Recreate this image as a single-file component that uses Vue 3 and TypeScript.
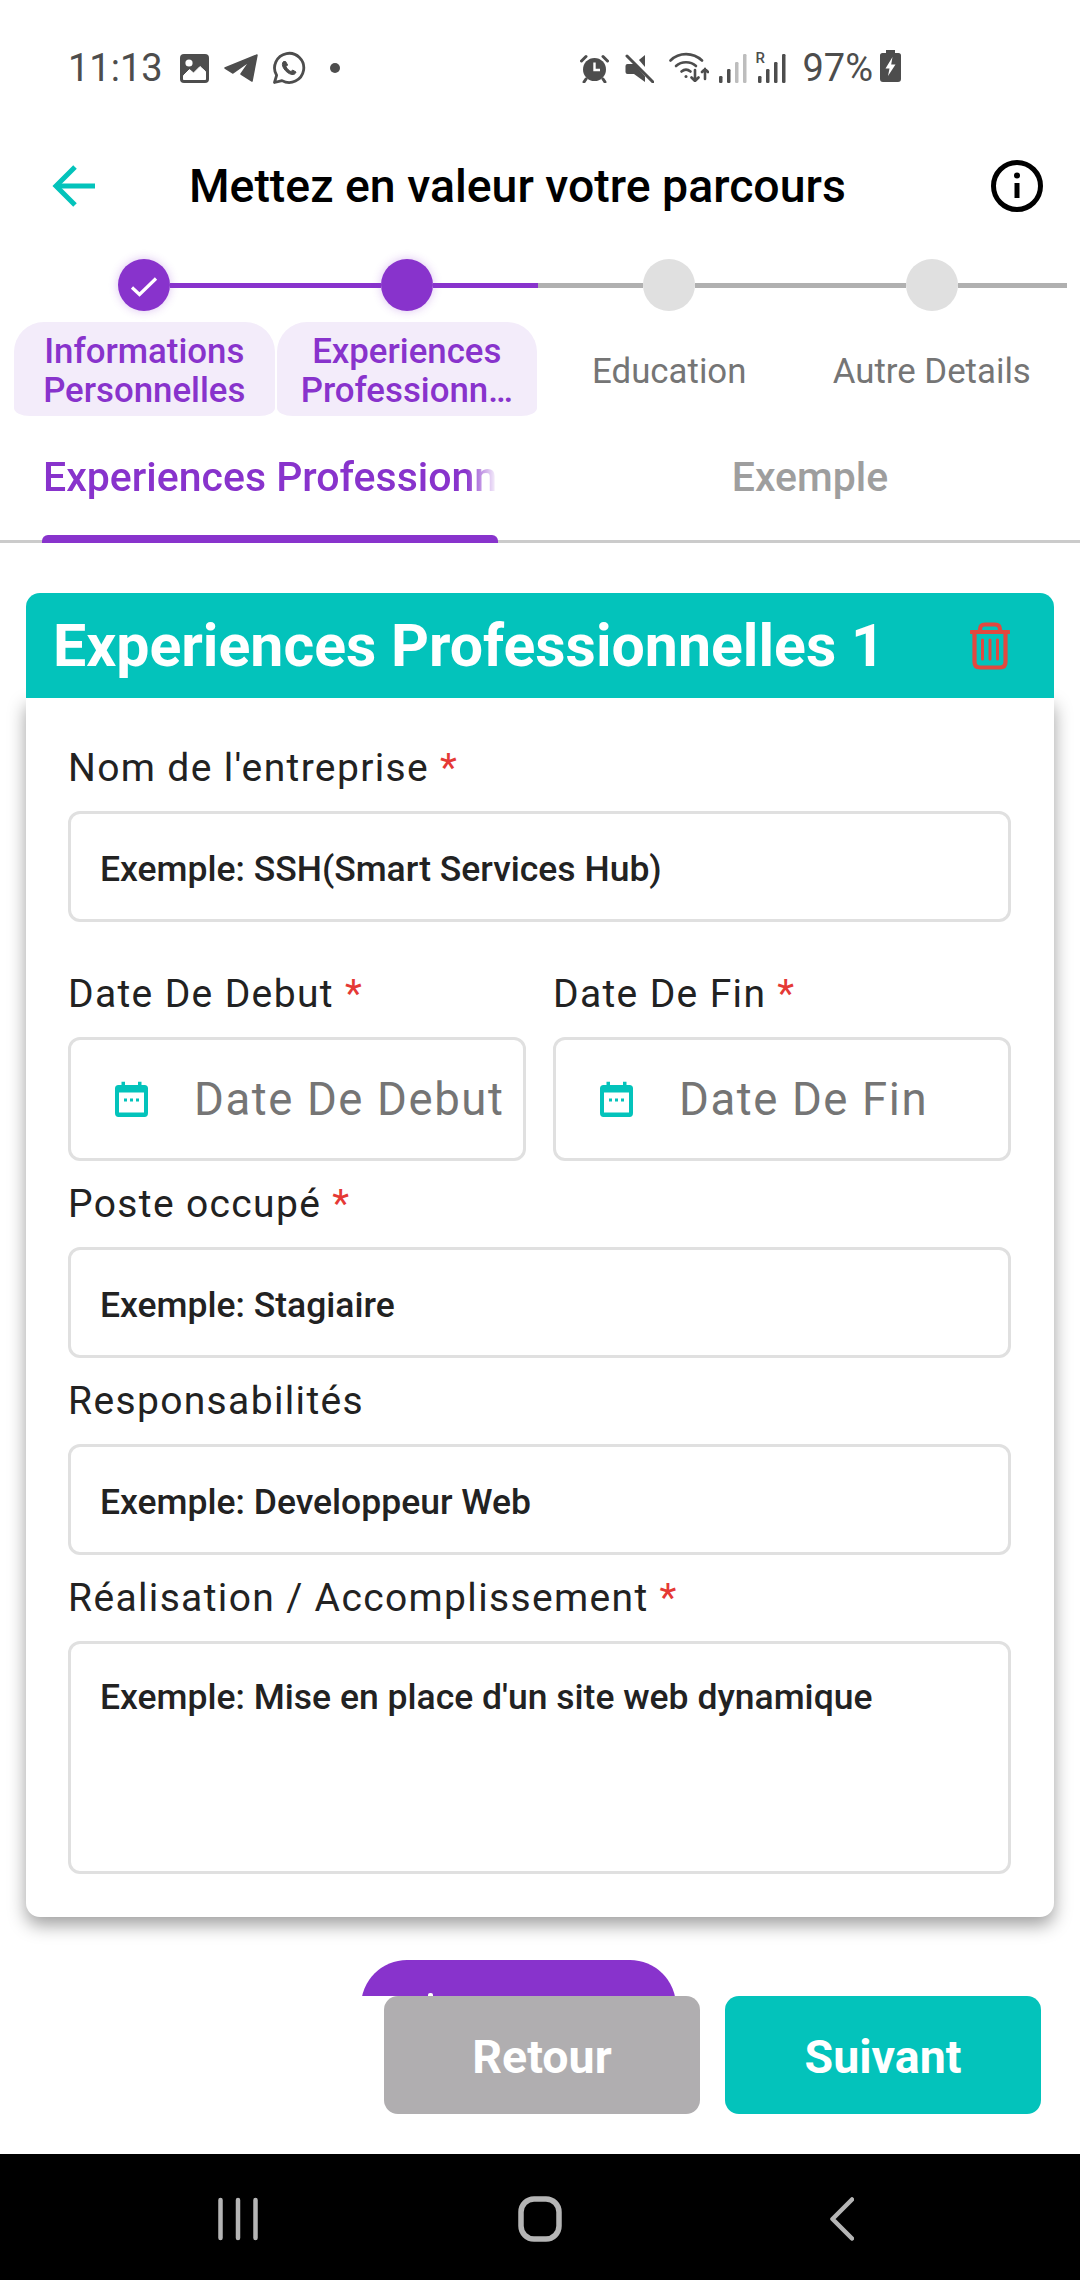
<script setup lang="ts">
interface Step { label: string[]; state: 'done' | 'active' | 'todo' }
const steps: Step[] = [
  { label: ['Informations', 'Personnelles'], state: 'done' },
  { label: ['Experiences', 'Professionn…'], state: 'active' },
  { label: ['Education'], state: 'todo' },
  { label: ['Autre Details'], state: 'todo' },
]
</script>

<template>
  <div class="page">
    <div class="status">
      <div class="status-group">
        <span class="time">11:13</span>
        <svg class="si-img" width="29" height="29" viewBox="0 0 29 29">
          <rect width="29" height="29" rx="4" fill="#4d4d4d" />
          <circle cx="9" cy="9" r="3.6" fill="#fff" />
          <path d="M3.5 25.5V21.5L9.5 15.5L13.5 19L20 12.5L25.5 17.5V25.5Z" fill="#fff" stroke="#fff" stroke-linejoin="round" />
        </svg>
        <svg class="si-tg" width="34" height="28" viewBox="0 0 34 28">
          <path d="M1 14L33 1L28 27L17 20L26 7L9 19Z" fill="#4d4d4d" stroke="#4d4d4d" stroke-width="1.5" stroke-linejoin="round" />
        </svg>
        <svg class="si-wa" width="34" height="34" viewBox="0 0 34 34" fill="none" stroke="#4d4d4d">
          <path d="M2.5 31.5L4.6 24.3A14.6 14.6 0 1 1 10 29.6Z" stroke-width="2.8" stroke-linejoin="round" />
          <path d="M11.5 10.5C10 12 10 14.5 11.6 17.2C13.6 20.6 16.8 23 20 23.5C22 23.8 23.6 22.8 24 21L20.6 19L19 20.6C16.8 19.6 15 17.8 14 15.6L15.6 14L13.6 10.5Z" fill="#4d4d4d" stroke-width="1" stroke-linejoin="round" />
        </svg>
        <span class="si-dot"></span>
      </div>
      <div class="status-group">
        <svg width="29" height="29" viewBox="0 0 29 29">
          <circle cx="14.5" cy="15.5" r="11.5" fill="#4d4d4d" />
          <path d="M14.5 8.5V16H20" stroke="#fff" stroke-width="2.4" fill="none" />
          <path d="M1.5 7L6 2.5M27.5 7L23 2.5" stroke="#4d4d4d" stroke-width="3" stroke-linecap="round" />
          <path d="M6 25L4 28M23 25L25 28" stroke="#4d4d4d" stroke-width="3" stroke-linecap="round" />
        </svg>
        <svg class="si-mute" width="29" height="29" viewBox="0 0 29 29">
          <path d="M0.5 12Q0.5 10 2.5 10H9L20 1V28L9 20H2.5Q0.5 20 0.5 18Z" fill="#4d4d4d" />
          <path d="M4 -1L28 27" stroke="#fff" stroke-width="6" />
          <path d="M2 2L28 28" stroke="#4d4d4d" stroke-width="3" stroke-linecap="round" />
        </svg>
        <svg class="si-wifi" width="40" height="31" viewBox="0 0 40 31" fill="none" stroke="#4d4d4d" stroke-width="2.6" stroke-linecap="round">
          <path d="M1.5 9.5C10 1 24 1 33 9.5" />
          <path d="M7 15C12.5 10 21.5 10 27 15" />
          <path d="M12.5 20.5C15.5 18 18.5 18 21.5 20.5" />
          <circle cx="17" cy="25.5" r="1.5" fill="#4d4d4d" stroke="none" />
          <path d="M26 19V30M22.5 26.5L26 30L29.5 26.5" />
          <path d="M36 28V18M33 21L36 18L39 21" />
        </svg>
        <svg class="si-sig1" width="28" height="29" viewBox="0 0 28 29">
          <rect x="0" y="22" width="3.5" height="7" rx="1.2" fill="#4d4d4d" />
          <rect x="8" y="15" width="3.5" height="14" rx="1.2" fill="#4d4d4d" />
          <rect x="16" y="8" width="3.5" height="21" rx="1.2" fill="#bdbdbd" />
          <rect x="24" y="0" width="3.5" height="29" rx="1.2" fill="#bdbdbd" />
        </svg>
        <div class="si-sig2">
          <span class="r">R</span>
          <svg width="31" height="29" viewBox="0 0 31 29">
            <rect x="3" y="22" width="3.5" height="7" rx="1.2" fill="#4d4d4d" />
            <rect x="11" y="15" width="3.5" height="14" rx="1.2" fill="#4d4d4d" />
            <rect x="19" y="8" width="3.5" height="21" rx="1.2" fill="#4d4d4d" />
            <rect x="27" y="0" width="3.5" height="29" rx="1.2" fill="#4d4d4d" />
          </svg>
        </div>
        <span class="batt-text">97%</span>
        <svg class="si-batt" width="21" height="32" viewBox="0 0 21 32">
          <path d="M6 0H15V3H18.5Q21 3 21 5.5V29Q21 32 18 32H3Q0 32 0 29V5.5Q0 3 2.5 3H6Z" fill="#4d4d4d" />
          <path d="M12.5 7L5.5 18.5H9.5L8 26L15.5 14.5H11.2Z" fill="#fff" />
        </svg>
      </div>
    </div>

    <div class="header">
      <svg class="back" width="44" height="42" viewBox="0 0 44 42" fill="none" stroke="#03c3bb" stroke-width="5">
        <path d="M43 21H4" />
        <path d="M23 2L4 21L23 40" />
      </svg>
      <h1 class="title">Mettez en valeur votre parcours</h1>
      <svg class="info" width="52" height="52" viewBox="0 0 52 52" fill="none" stroke="#000">
        <circle cx="26" cy="26" r="23.5" stroke-width="5" />
        <path d="M26 23V38" stroke-width="5" />
        <circle cx="26" cy="15.5" r="3" fill="#000" stroke="none" />
      </svg>
    </div>

    <div class="stepper">
      <div v-for="(s, i) in steps" :key="i" class="step">
        <div class="track">
          <span class="seg" :class="{ none: i === 0, on: s.state !== 'todo' }"></span>
          <span class="dot" :class="s.state">
            <svg v-if="s.state === 'done'" width="52" height="52" viewBox="0 0 52 52" fill="none">
              <path d="M14 28.5L21.5 35.5L38 19.5" stroke="#fff" stroke-width="3.2" />
            </svg>
          </span>
          <span class="seg" :class="{ on: s.state !== 'todo' }"></span>
        </div>
        <div class="chip" :class="{ lit: s.state !== 'todo' }">
          <span v-for="l in s.label" :key="l">{{ l }}</span>
        </div>
      </div>
    </div>

    <div class="tabs">
      <div class="tab tab-on">
        <span class="tab-text">Experiences Professionn</span>
        <span class="tab-bar"></span>
      </div>
      <div class="tab tab-off">Exemple</div>
    </div>

    <section class="card">
      <div class="card-head">
        <h2>Experiences Professionnelles 1</h2>
        <svg width="40" height="48" viewBox="0 0 40 48" fill="none" stroke="#e2483f" stroke-width="4.2" stroke-linecap="round">
          <path d="M1.5 10H38.5" />
          <path d="M10 10V7.5Q10 2.5 15 2.5H25Q30 2.5 30 7.5V10" />
          <path d="M4.5 10V40Q4.5 45.5 10 45.5H30Q35.5 45.5 35.5 40V10" />
          <path d="M12.5 18V37M20 18V37M27.5 18V37" stroke-width="3" />
        </svg>
      </div>
      <div class="card-body">
        <div class="field">
          <label class="lbl">Nom de l'entreprise <em>*</em></label>
          <div class="box">Exemple: SSH(Smart Services Hub)</div>
        </div>
        <div class="dates">
          <div class="field">
            <label class="lbl">Date De Debut <em>*</em></label>
            <div class="box date">
              <svg width="33" height="36" viewBox="0 0 33 36">
                <path d="M3.5 4H6.5V0.8H10V4H23V0.8H26.5V4H29.5Q33 4 33 7.5V32Q33 36 29.5 36H3.5Q0 36 0 32V7.5Q0 4 3.5 4Z" fill="#03c3bb" />
                <rect x="4" y="11.5" width="25" height="20" fill="#fff" />
                <path d="M9 17.5h3v3h-3zM15 17.5h3v3h-3zM21 17.5h3v3h-3z" fill="#03c3bb" />
              </svg>
              <span>Date De Debut</span>
            </div>
          </div>
          <div class="field">
            <label class="lbl">Date De Fin <em>*</em></label>
            <div class="box date">
              <svg width="33" height="36" viewBox="0 0 33 36">
                <path d="M3.5 4H6.5V0.8H10V4H23V0.8H26.5V4H29.5Q33 4 33 7.5V32Q33 36 29.5 36H3.5Q0 36 0 32V7.5Q0 4 3.5 4Z" fill="#03c3bb" />
                <rect x="4" y="11.5" width="25" height="20" fill="#fff" />
                <path d="M9 17.5h3v3h-3zM15 17.5h3v3h-3zM21 17.5h3v3h-3z" fill="#03c3bb" />
              </svg>
              <span>Date De Fin</span>
            </div>
          </div>
        </div>
        <div class="field">
          <label class="lbl">Poste occupé <em>*</em></label>
          <div class="box">Exemple: Stagiaire</div>
        </div>
        <div class="field">
          <label class="lbl">Responsabilités</label>
          <div class="box">Exemple: Developpeur Web</div>
        </div>
        <div class="field">
          <label class="lbl">Réalisation / Accomplissement <em>*</em></label>
          <div class="box area">Exemple: Mise en place d'un site web dynamique</div>
        </div>
      </div>
    </section>

    <div class="fab"><span class="fab-speck"></span></div>

    <div class="footer">
      <button class="btn gray">Retour</button>
      <button class="btn teal">Suivant</button>
    </div>

    <div class="nav">
      <svg width="40" height="44" viewBox="0 0 40 44" fill="none" stroke="#b5b5b5" stroke-width="4.5" stroke-linecap="round">
        <path d="M2.5 3V41M20 3V41M37.5 3V41" />
      </svg>
      <svg width="44" height="46" viewBox="0 0 44 46" fill="none" stroke="#b5b5b5" stroke-width="5.5">
        <rect x="3" y="3" width="38" height="40" rx="13" />
      </svg>
      <svg width="24" height="44" viewBox="0 0 24 44" fill="none" stroke="#b5b5b5" stroke-width="4.5" stroke-linecap="round" stroke-linejoin="round">
        <path d="M22 2.5L2.5 22L22 41.5" />
      </svg>
    </div>
  </div>
</template>

<style>
html, body { margin: 0; background: #fff; }
</style>

<style scoped>
* { box-sizing: border-box; }
.page {
  position: relative;
  width: 1080px;
  height: 2280px;
  overflow: hidden;
  background: #fff;
  display: flex;
  flex-direction: column;
  font-family: Roboto, "Liberation Sans", sans-serif;
  color: #222;
}
.status {
  height: 133px;
  padding: 49px 179px 0 68px;
  display: flex;
  justify-content: space-between;
  align-items: flex-start;
  color: #4d4d4d;
}
.status-group { display: flex; align-items: center; height: 38px; }
.time { font-size: 38px; line-height: 38px; width: 112px; }
.si-tg { margin-left: 15px; }
.si-wa { margin-left: 14px; }
.si-dot { width: 10px; height: 10px; border-radius: 50%; background: #4d4d4d; margin-left: 24px; }
.si-mute { margin-left: 16px; }
.si-wifi { margin-left: 15px; margin-top: -4px; }
.si-sig1 { margin-left: 10px; }
.si-sig2 { position: relative; margin-left: 8px; width: 31px; display: flex; }
.r { position: absolute; left: 0; top: -3px; font-size: 15px; line-height: 15px; font-weight: 500; }
.batt-text { font-size: 38px; line-height: 38px; margin-left: 16px; }
.si-batt { margin-left: 7px; margin-top: -4px; }

.header {
  height: 106px;
  padding: 0 37px 0 52px;
  display: flex;
  align-items: center;
}
.back { flex: none; }
.title {
  margin: 0 0 0 93px;
  font-size: 46.4px;
  line-height: 52px;
  font-weight: 500;
  color: #000;
  white-space: nowrap;
}
.info { margin-left: auto; flex: none; }

.stepper {
  margin-top: 20px;
  padding: 0 13px;
  display: grid;
  grid-template-columns: repeat(4, 262.5px);
}
.step { display: flex; flex-direction: column; align-items: stretch; }
.track { display: flex; align-items: center; height: 52px; }
.seg { flex: none; width: 105.25px; height: 5px; background: #b0b0b0; }
.seg.on { background: #8833cc; }
.seg.none { visibility: hidden; }
.step:last-child .seg:last-child { width: 109px; }
.dot {
  flex: none;
  width: 52px;
  height: 52px;
  border-radius: 50%;
  background: #e0e0e0;
  display: flex;
}
.dot.done, .dot.active {
  background: #8833cc;
  box-shadow: 0 0 10px rgba(136, 51, 204, 0.3);
}
.chip {
  margin: 11px 1px 0;
  padding-top: 4px;
  height: 94px;
  display: flex;
  flex-direction: column;
  align-items: center;
  justify-content: center;
  font-size: 34.8px;
  line-height: 39px;
  color: #757575;
  white-space: nowrap;
  border-radius: 30px 30px 16px 16px / 30px 30px 8px 8px;
}
.chip.lit { background: #f3ecfa; color: #8833cc; font-weight: 500; }

.tabs {
  height: 127px;
  display: flex;
  border-bottom: 3px solid #cbcbcb;
}
.tab { display: flex; flex-direction: column; font-size: 41px; font-weight: 500; }
.tab-on {
  margin-left: 42px;
  width: 456px;
  color: #8833cc;
  height: 127px;
}
.tab-text {
  display: block;
  overflow: hidden;
  white-space: nowrap;
  padding: 39px 0 0 1px;
  line-height: 44px;
  flex: 1;
  -webkit-mask-image: linear-gradient(90deg, #000 93%, transparent 100%);
  mask-image: linear-gradient(90deg, #000 93%, transparent 100%);
}
.tab-bar { flex: none; height: 8px; background: #8833cc; border-radius: 6px 6px 0 0; }
.tab-off {
  flex: 1;
  margin-left: 42px;
  padding-top: 39px;
  line-height: 44px;
  text-align: center;
  color: #9e9e9e;
}

.card {
  margin: 50px 26px 0;
  border-radius: 14px;
  background: #fff;
}
.card-head {
  position: relative;
  z-index: 1;
  height: 105px;
  background: #03c3bb;
  border-radius: 14px 14px 0 0;
  padding: 0 44px 0 27px;
  display: flex;
  align-items: center;
  justify-content: space-between;
  color: #fff;
}
.card-head h2 { margin: 0; font-size: 59px; line-height: 66px; font-weight: 700; white-space: nowrap; }
.card-body {
  padding: 50px 43px 43px 42px;
  display: flex;
  flex-direction: column;
  gap: 23px;
  border-radius: 0 0 14px 14px;
  box-shadow: 0 8px 18px rgba(0, 0, 0, 0.38);
}
.card-body > .field:first-child { margin-bottom: 29px; }
.field { display: flex; flex-direction: column; min-width: 0; }
.lbl {
  height: 44px;
  margin-bottom: 19px;
  font-size: 39px;
  line-height: 40px;
  letter-spacing: 1.35px;
  color: #222;
  white-space: nowrap;
}
.lbl em { font-style: normal; color: #e53935; }
.box {
  height: 111px;
  border: 3px solid #e0e0e0;
  border-radius: 12px;
  padding: 5px 29px 0;
  display: flex;
  align-items: center;
  font-size: 35.5px;
  font-weight: 500;
  color: #222;
  white-space: nowrap;
}
.dates { display: grid; grid-template-columns: 458px 458px; gap: 27px; }
.box.date {
  height: 124px;
  padding: 0 0 0 44px;
  font-size: 45.5px;
  font-weight: 400;
  letter-spacing: 1.6px;
  color: #757575;
}
.box.date span { margin-left: 46px; }
.box.area { height: 233px; align-items: flex-start; padding-top: 32px; }

.fab {
  position: absolute;
  left: 361px;
  top: 1960px;
  width: 315px;
  height: 120px;
  border-radius: 46px;
  background: #8833cc;
}
.fab-speck {
  position: absolute;
  left: 67px;
  top: 33px;
  width: 5px;
  height: 3px;
  background: #fff;
  border-radius: 2px 2px 0 0;
}
.footer {
  position: absolute;
  left: 0;
  right: 0;
  top: 1996px;
  height: 158px;
  background: #fff;
  padding: 0 39px 0 0;
  display: flex;
  justify-content: flex-end;
  align-items: flex-start;
  gap: 25px;
}
.btn {
  width: 316px;
  height: 118px;
  border: 0;
  padding: 4px 0 0;
  border-radius: 14px;
  color: #fff;
  font-family: inherit;
  font-size: 46.5px;
  font-weight: 700;
}
.btn.gray { background: #b0aeb0; }
.btn.teal { background: #03c3bb; }

.nav {
  position: absolute;
  left: 0;
  right: 0;
  bottom: 0;
  height: 126px;
  padding-top: 3px;
  background: #000;
  display: grid;
  grid-template-columns: repeat(3, 302px);
  justify-content: center;
  justify-items: center;
  align-items: center;
}
</style>
